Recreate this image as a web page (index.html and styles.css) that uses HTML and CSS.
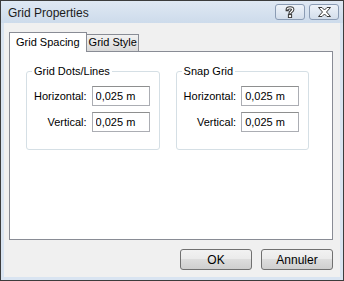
FILE: index.html
```html
<!DOCTYPE html>
<html lang="fr">
  <head>
    <meta charset="UTF-8" />
    <meta name="viewport" content="width=device-width, initial-scale=1.0" />
    <title>Grid Properties</title>
    <link rel="stylesheet" href="styles.css">
  </head>
  <body>
    <div class="window">
      <div class="titlebar">
        <span class="title">Grid Properties</span>
        <div class="caption-buttons">
          <span class="cap-btn">
            <svg width="10" height="12" viewBox="0 0 10 12">
              <path d="M2.2 3.6 C2.2 1.2 7.8 1.2 7.8 3.6 C7.8 5.4 5 5.4 5 7.4" fill="none" stroke="#3a3a3a" stroke-width="3.2" stroke-linecap="square" />
              <path d="M2.2 3.6 C2.2 1.2 7.8 1.2 7.8 3.6 C7.8 5.4 5 5.4 5 7.4" fill="none" stroke="#fff" stroke-width="1.2" />
              <rect x="3.4" y="8.6" width="3.2" height="3" fill="#fff" stroke="#3a3a3a" stroke-width="1" />
            </svg>
          </span>
          <span class="cap-btn">
            <svg width="13" height="10" viewBox="0 0 13 10">
              <polygon points="0.5,0.5 4,0.5 6.5,3 9,0.5 12.5,0.5 8.5,5 12.5,9.5 9,9.5 6.5,7 4,9.5 0.5,9.5 4.5,5" fill="#fff" stroke="#3a3a3a" stroke-width="1" stroke-linejoin="round" />
            </svg>
          </span>
        </div>
      </div>
      <div class="client">
        <div class="tabs">
          <div class="tab active">Grid Spacing</div>
          <div class="tab">Grid Style</div>
        </div>
        <div class="panel">
          <fieldset class="group">
            <legend>Grid Dots/Lines</legend>
            <label>Horizontal:</label>
            <input type="text" value="0,025 m" />
            <label>Vertical:</label>
            <input type="text" value="0,025 m" />
          </fieldset>
          <fieldset class="group">
            <legend>Snap Grid</legend>
            <label>Horizontal:</label>
            <input type="text" value="0,025 m" />
            <label>Vertical:</label>
            <input type="text" value="0,025 m" />
          </fieldset>
        </div>
        <div class="footer">
          <button>OK</button>
          <button>Annuler</button>
        </div>
      </div>
    </div>
  </body>
</html>
```

FILE: styles.css
```css
body {
  margin: 0;
  font-family: "Liberation Sans", Arial, sans-serif;
  font-size: 11px;
  color: #000;
}
.window {
  width: 344px;
  height: 281px;
  box-sizing: border-box;
  border: 1px solid #3c3c3c;
  padding: 0 3px 3px;
  background: #d9e4f1;
  display: flex;
  flex-direction: column;
}
.titlebar {
  height: 22px;
  flex: none;
  display: flex;
  justify-content: space-between;
  align-items: flex-start;
  background: linear-gradient(#dfe8f3, #cddbeb);
  margin: 0 -3px;
  padding: 0 3px;
}
.title {
  font-size: 12px;
  margin: 5px 0 0 4px;
  color: #1b1b1b;
}
.caption-buttons {
  display: flex;
  gap: 4px;
  margin: 3px 1px 0 0;
}
.cap-btn {
  width: 30px;
  height: 16px;
  box-sizing: border-box;
  border: 1px solid #8b9cb4;
  border-radius: 3px;
  background: linear-gradient(#eef3f9, #d3deeb);
  display: flex;
  align-items: center;
  justify-content: center;
}
.client {
  flex: 1;
  background: #f0f0f0;
  padding: 9px 7px 0 5px;
  display: flex;
  flex-direction: column;
}
.tabs {
  display: flex;
  align-items: flex-end;
  height: 19px;
  flex: none;
}
.tab {
  height: 17px;
  box-sizing: border-box;
  border: 1px solid #898c95;
  border-bottom: none;
  padding: 1px 1px 0 2px;
  margin-left: -1px;
  background: linear-gradient(#f2f2f2, #e6e6e6 50%, #d9d9d9);
}
.tab.active {
  height: 20px;
  margin-left: 0;
  margin-bottom: -1px;
  padding: 3px 6px 0 6px;
  background: #fff;
  position: relative;
  z-index: 1;
}
.panel {
  flex: 1;
  border: 1px solid #898c95;
  background: #fff;
  padding: 13px 0 0 16px;
  display: flex;
  align-items: flex-start;
  gap: 16px;
}
.group {
  margin: 0;
  border: 1px solid #d5dfe5;
  border-radius: 3px;
  padding: 9px 9px 17px 7px;
  display: grid;
  grid-template-columns: auto 58px;
  column-gap: 5px;
  row-gap: 6px;
  align-items: center;
}
.group legend {
  padding: 0 2px;
  margin-left: -2px;
}
.group label {
  justify-self: end;
}
.group input {
  width: 58px;
  height: 20px;
  box-sizing: border-box;
  border: 1px solid #abadb3;
  border-top-color: #8e8f8f;
  padding: 0 3px;
  font: inherit;
  color: #000;
}
.footer {
  flex: none;
  display: flex;
  justify-content: flex-end;
  gap: 9px;
  padding: 9px 0 7px;
}
.footer button {
  width: 72px;
  height: 21px;
  border: 1px solid #707070;
  border-radius: 3px;
  background: linear-gradient(#f2f2f2, #ebebeb 45%, #dddddd 50%, #cfcfcf);
  font: inherit;
  font-size: 12px;
  color: #000;
  padding: 0;
}
```
